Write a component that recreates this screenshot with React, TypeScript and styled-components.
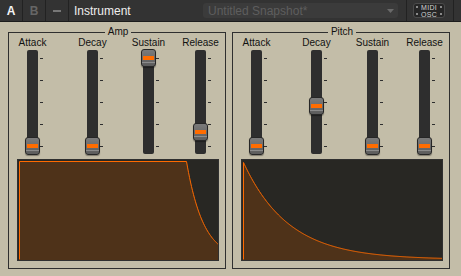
import React from 'react';
import styled, { createGlobalStyle } from 'styled-components';

const GlobalStyle = createGlobalStyle`
  html, body {
    margin: 0;
    padding: 0;
    background: #c3bda8;
  }
  body {
    font-family: "Liberation Sans", Arial, sans-serif;
  }
`;

const Screen = styled.div`
  width: 461px;
  height: 276px;
  overflow: hidden;
  background: #c3bda8;
`;

const TopBar = styled.div`
  display: flex;
  align-items: stretch;
  height: 21px;
  background: #333333;
  border-bottom: 1px solid #1c1c1c;
`;

const TabCell = styled.div<{ $active?: boolean }>`
  width: 22px;
  display: flex;
  align-items: center;
  justify-content: center;
  border-right: 1px solid #222222;
  color: ${(p) => (p.$active ? '#f4f4f4' : '#666666')};
  font-size: 12px;
  font-weight: bold;
`;

const MinusGlyph = styled.span`
  width: 8px;
  height: 2px;
  background: #777777;
`;

const InstrumentName = styled.div`
  width: 129px;
  padding-left: 5px;
  display: flex;
  align-items: center;
  color: #eeeeee;
  font-size: 12px;
`;

const SnapshotSelect = styled.div`
  width: 195px;
  margin: 3px 0;
  padding: 0 4px 0 5px;
  box-sizing: border-box;
  display: flex;
  align-items: center;
  justify-content: space-between;
  background: #3b3b3b;
  border-radius: 3px;
  color: #5e5e5e;
  font-size: 12px;
`;

const Divider = styled.div<{ $ml: number }>`
  width: 1px;
  margin-left: ${(p) => p.$ml}px;
  background: #222222;
`;

const MidiBadge = styled.div`
  width: 32px;
  margin: 3px 0 3px 6px;
  box-sizing: border-box;
  display: flex;
  flex-direction: column;
  justify-content: center;
  border: 1px solid #4a4a4a;
  border-radius: 3px;
  background: #262626;
`;

const MidiLine = styled.div`
  display: flex;
  align-items: center;
  justify-content: space-between;
  padding: 0 2px;
  height: 7px;
  color: #d2d2d2;
  font-size: 7px;
  line-height: 7px;
  letter-spacing: 0.3px;
`;

const Dot = styled.span`
  width: 2px;
  height: 2px;
  background: #8a8a8a;
`;

const PanelRow = styled.div`
  display: flex;
  gap: 6px;
  padding: 5px 0 0 8px;
`;

const Panel = styled.fieldset`
  width: 218px;
  margin: 0;
  padding: 0 6px 7px 8px;
  min-width: 0;
  box-sizing: border-box;
  border: 1px solid #2f2f2f;
`;

const Legend = styled.legend`
  margin: 0 auto;
  padding: 0 3px;
  font-size: 10px;
  line-height: 10px;
  color: #111111;
`;

const FaderRow = styled.div`
  display: flex;
`;

const FaderColumn = styled.div<{ $ml: number }>`
  width: 25px;
  margin-left: ${(p) => p.$ml}px;
  display: flex;
  flex-direction: column;
  align-items: center;
`;

const FaderLabel = styled.div`
  height: 12px;
  line-height: 12px;
  font-size: 10px;
  color: #111111;
  white-space: nowrap;
`;

const FaderBody = styled.div`
  width: 11px;
  margin-top: 1px;
  display: flex;
`;

const Track = styled.div`
  position: relative;
  flex: 0 0 11px;
  height: 104px;
  background: #2e2e2e;
  border-radius: 2px;
`;

const Ticks = styled.div`
  flex: 0 0 3px;
  margin-left: 2px;
  padding-top: 8px;
  display: flex;
  flex-direction: column;
  gap: 21px;
`;

const Tick = styled.span`
  height: 1px;
  background: #2e2e2e;
`;

const Knob = styled.div`
  position: absolute;
  left: -2px;
  width: 15px;
  height: 18px;
  box-sizing: border-box;
  display: flex;
  flex-direction: column;
  border: 1px solid #262626;
  border-radius: 3px;
  background: linear-gradient(#7b7b7b, #5c5c5c);
  box-shadow: 0 1px 1px rgba(0, 0, 0, 0.35);
`;

const KnobStripe = styled.span`
  height: 4px;
  margin: 6px 1px 0;
  background: #ff6c00;
`;

const KnobLine = styled.span`
  height: 1px;
  margin: 2px 0 0;
  background: #8c8c8c;
`;

const Display = styled.div`
  width: 202px;
  height: 102px;
  margin-top: 5px;
  box-sizing: border-box;
  border: 1px solid #303030;
  background: #282723;
`;

type Fader = { label: string; value: number };

// left offsets so the tracks line up with the original grid
const gaps = [3, 35, 31, 27];

const curve = (x0: number, top: number, tau: number, floorY: number) => {
  const pts: string[] = [];
  for (let x = x0; x <= 200; x += 1) {
    const y = floorY - (floorY - top) * Math.exp(-(x - x0) / tau);
    pts.push(`L${x + 0.5},${y.toFixed(2)}`);
  }
  return pts.join(' ');
};

const ampLine = `M1.5,99.5 L1.5,1.5 L168.5,1.5 ${curve(168, 1.5, 17, 99.5)}`;
const pitchLine = `M1.5,99.5 L1.5,2.5 ${curve(1, 2.5, 45, 99.5)}`;

const Envelope = ({ line }: { line: string }) => (
  <Display>
    <svg width="200" height="100" viewBox="0 0 200 100">
      <path d={`${line} L200,100 L1,100 Z`} fill="#4e3219" />
      <path d={line} fill="none" stroke="#ff6a00" strokeWidth="1" />
    </svg>
  </Display>
);

const FaderPanel = ({
  title,
  faders,
  line,
}: {
  title: string;
  faders: Fader[];
  line: string;
}) => (
  <Panel>
    <Legend>{title}</Legend>
    <FaderRow>
      {faders.map((f, i) => (
        <FaderColumn key={f.label} $ml={gaps[i]}>
          <FaderLabel>{f.label}</FaderLabel>
          <FaderBody>
            <Track>
              <Knob style={{ top: 96 - f.value * 88 - 9 }}>
                <KnobStripe />
                <KnobLine />
              </Knob>
            </Track>
            <Ticks>
              {[0, 1, 2, 3, 4].map((t) => (
                <Tick key={t} />
              ))}
            </Ticks>
          </FaderBody>
        </FaderColumn>
      ))}
    </FaderRow>
    <Envelope line={line} />
  </Panel>
);

const amp: Fader[] = [
  { label: 'Attack', value: 0 },
  { label: 'Decay', value: 0 },
  { label: 'Sustain', value: 1 },
  { label: 'Release', value: 0.16 },
];

const pitch: Fader[] = [
  { label: 'Attack', value: 0 },
  { label: 'Decay', value: 0.45 },
  { label: 'Sustain', value: 0 },
  { label: 'Release', value: 0 },
];

export default function App() {
  return (
    <Screen>
      <GlobalStyle />
      <TopBar>
        <TabCell $active>A</TabCell>
        <TabCell>B</TabCell>
        <TabCell>
          <MinusGlyph />
        </TabCell>
        <InstrumentName>Instrument</InstrumentName>
        <SnapshotSelect>
          <span>Untitled Snapshot*</span>
          <svg width="7" height="4" viewBox="0 0 7 4">
            <path d="M0 0 H7 L3.5 4 Z" fill="#6a6a6a" />
          </svg>
        </SnapshotSelect>
        <Divider $ml={8} />
        <MidiBadge>
          <MidiLine>
            <Dot />
            MIDI
            <Dot />
          </MidiLine>
          <MidiLine>
            <Dot />
            OSC
            <Dot />
          </MidiLine>
        </MidiBadge>
        <Divider $ml={8} />
      </TopBar>
      <PanelRow>
        <FaderPanel title="Amp" faders={amp} line={ampLine} />
        <FaderPanel title="Pitch" faders={pitch} line={pitchLine} />
      </PanelRow>
    </Screen>
  );
}
